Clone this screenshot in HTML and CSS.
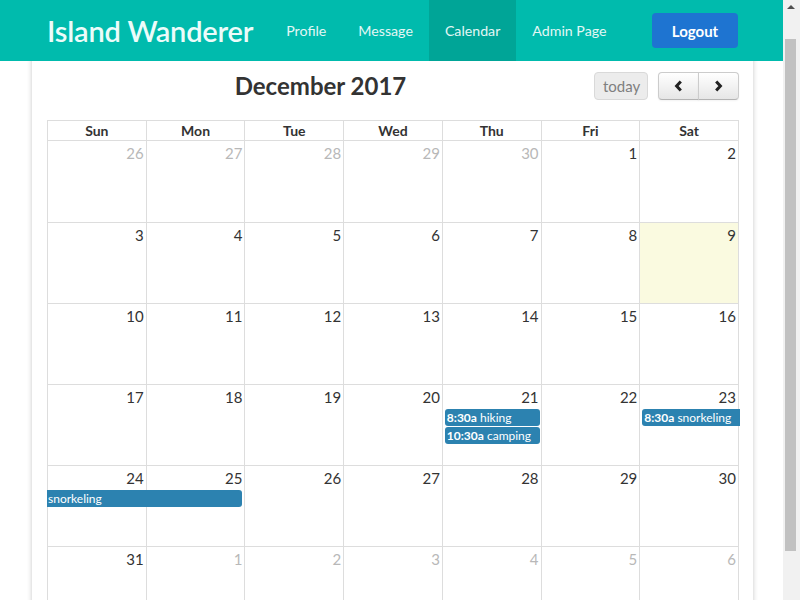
FILE: index.html
```html
<!DOCTYPE html>
<html lang="en">
<head>
<meta charset="utf-8">
<title>Island Wanderer - Calendar</title>
<link rel="stylesheet" href="styles.css">
</head>
<body>
<nav class="navbar">
  <div class="nav-inner">
    <a class="brand" href="#">Island Wanderer</a>
    <ul class="nav-links">
      <li><a href="#">Profile</a></li>
      <li><a href="#">Message</a></li>
      <li class="active"><a href="#">Calendar</a></li>
      <li><a href="#">Admin Page</a></li>
    </ul>
    <button class="logout">Logout</button>
  </div>
</nav>

<div class="scrollbar" aria-hidden="true">
  <div class="scroll-up"></div>
  <div class="scroll-thumb"></div>
</div>

<main class="card">
  <div class="toolbar">
    <h2 class="title">December 2017</h2>
    <div class="tools">
      <button class="btn today">today</button>
      <div class="btn-group">
        <button class="btn nav-btn"><svg width="9" height="12" viewBox="0 0 9 12"><polyline points="6.8,1.5 2.6,6 6.8,10.5" fill="none" stroke="#222" stroke-width="3"/></svg></button>
        <button class="btn nav-btn"><svg width="9" height="12" viewBox="0 0 9 12"><polyline points="2.2,1.5 6.4,6 2.2,10.5" fill="none" stroke="#222" stroke-width="3"/></svg></button>
      </div>
    </div>
  </div>

  <div class="cal">
    <div class="dow">
      <div>Sun</div><div>Mon</div><div>Tue</div><div>Wed</div><div>Thu</div><div>Fri</div><div>Sat</div>
    </div>

    <div class="week">
      <div class="day other"><span>26</span></div>
      <div class="day other"><span>27</span></div>
      <div class="day other"><span>28</span></div>
      <div class="day other"><span>29</span></div>
      <div class="day other"><span>30</span></div>
      <div class="day"><span>1</span></div>
      <div class="day"><span>2</span></div>
    </div>

    <div class="week">
      <div class="day"><span>3</span></div>
      <div class="day"><span>4</span></div>
      <div class="day"><span>5</span></div>
      <div class="day"><span>6</span></div>
      <div class="day"><span>7</span></div>
      <div class="day"><span>8</span></div>
      <div class="day today-cell"><span>9</span></div>
    </div>

    <div class="week">
      <div class="day"><span>10</span></div>
      <div class="day"><span>11</span></div>
      <div class="day"><span>12</span></div>
      <div class="day"><span>13</span></div>
      <div class="day"><span>14</span></div>
      <div class="day"><span>15</span></div>
      <div class="day"><span>16</span></div>
    </div>

    <div class="week">
      <div class="day"><span>17</span></div>
      <div class="day"><span>18</span></div>
      <div class="day"><span>19</span></div>
      <div class="day"><span>20</span></div>
      <div class="day"><span>21</span></div>
      <div class="day"><span>22</span></div>
      <div class="day"><span>23</span></div>
      <div class="event c5 r2"><b>8:30a</b> hiking</div>
      <div class="event c5 r3"><b>10:30a</b> camping</div>
      <div class="event c7 r2 cont-right"><b>8:30a</b> snorkeling</div>
    </div>

    <div class="week">
      <div class="day"><span>24</span></div>
      <div class="day"><span>25</span></div>
      <div class="day"><span>26</span></div>
      <div class="day"><span>27</span></div>
      <div class="day"><span>28</span></div>
      <div class="day"><span>29</span></div>
      <div class="day"><span>30</span></div>
      <div class="event c1-2 r2 cont-left">snorkeling</div>
    </div>

    <div class="week">
      <div class="day"><span>31</span></div>
      <div class="day other"><span>1</span></div>
      <div class="day other"><span>2</span></div>
      <div class="day other"><span>3</span></div>
      <div class="day other"><span>4</span></div>
      <div class="day other"><span>5</span></div>
      <div class="day other"><span>6</span></div>
    </div>
  </div>
</main>
<script src="script.js"></script>
</body>
</html>
```

FILE: styles.css
```css
* { box-sizing: border-box; }

html, body {
  margin: 0;
  padding: 0;
  background: #fff;
  font-family: Lato, "Open Sans", "Liberation Sans", sans-serif;
  color: #333;
}

body {
  padding-top: 78px;
  padding-right: 15px;
}

/* Fake window scrollbar (overlays the right edge) */
.scrollbar {
  position: fixed;
  top: 0;
  right: 0;
  width: 17px;
  height: 100vh;
  background: #f1f1f1;
  z-index: 20;
}

.scroll-up {
  position: absolute;
  top: 5px;
  left: 4px;
  width: 0;
  height: 0;
  border-left: 4px solid transparent;
  border-right: 4px solid transparent;
  border-bottom: 4px solid #505050;
}

.scroll-thumb {
  position: absolute;
  top: 39px;
  left: 2px;
  width: 11px;
  height: 512px;
  background: #c1c1c1;
}

/* Navbar */
.navbar {
  position: fixed;
  top: 0;
  left: 0;
  right: 15px;
  height: 61px;
  background: #00bbad;
  z-index: 10;
}

.nav-inner {
  width: 721px;
  margin: 0 auto;
  padding: 0 15px;
  height: 61px;
  display: flex;
  align-items: center;
}

.brand {
  font-size: 29px;
  font-weight: 600;
  color: #ecfcfa;
  text-decoration: none;
  margin-right: 17px;
  letter-spacing: -0.2px;
}

.nav-links {
  list-style: none;
  margin: 0;
  padding: 0;
  display: flex;
  height: 61px;
}

.nav-links li {
  display: flex;
}

.nav-links a {
  display: flex;
  align-items: center;
  padding: 0 16px;
  font-size: 14.2px;
  color: #e3f7f5;
  text-decoration: none;
}

.nav-links li.active a {
  background: #00a597;
}

.logout {
  margin-left: auto;
  width: 86px;
  height: 35px;
  border: none;
  border-radius: 4px;
  background: #1e74d1;
  color: #fff;
  font-family: inherit;
  font-size: 15px;
  font-weight: 700;
}

/* Card */
.card {
  width: 721px;
  margin: 0 auto;
  padding: 20px 14px 15px 15px;
  background: #fff;
  box-shadow: 0 0 5px rgba(0, 0, 0, 0.22);
}

.toolbar {
  display: flex;
  align-items: center;
  margin-bottom: 20px;
}

.title {
  flex: 1;
  margin: 0;
  text-align: center;
  font-size: 24px;
  font-weight: 700;
  color: #333;
  line-height: 28px;
}

.tools {
  display: flex;
}

.btn {
  height: 28px;
  font-family: inherit;
  font-size: 15px;
  border: 1px solid #ccc;
  border-bottom-color: #b3b3b3;
  border-radius: 4px;
  background: linear-gradient(#fff, #e6e6e6);
  box-shadow: inset 0 1px 0 rgba(255,255,255,.2), 0 1px 2px rgba(0,0,0,.05);
  color: #333;
  padding: 0 8px;
}

.btn.today {
  width: 54px;
  background: #ececec;
  border-color: #d9d9d9;
  color: #7f7f7f;
  box-shadow: none;
}

.btn-group {
  display: flex;
  margin-left: 10px;
}

.nav-btn {
  width: 41px;
  display: flex;
  align-items: center;
  justify-content: center;
}

.btn-group .nav-btn:first-child {
  border-top-right-radius: 0;
  border-bottom-right-radius: 0;
}

.btn-group .nav-btn:last-child {
  margin-left: -1px;
  border-top-left-radius: 0;
  border-bottom-left-radius: 0;
}

/* Calendar grid */
.cal {
  border-top: 1px solid #ddd;
  border-left: 1px solid #ddd;
}

.dow {
  display: grid;
  grid-template-columns: repeat(7, 1fr);
}

.dow div {
  border-right: 1px solid #ddd;
  border-bottom: 1px solid #ddd;
  height: 20px;
  line-height: 19px;
  text-align: center;
  font-size: 14px;
  font-weight: 700;
}

.week {
  display: grid;
  grid-template-columns: repeat(7, 1fr);
  grid-template-rows: 24px 18px 18px 1fr;
  height: 81px;
}

.week:nth-child(2) {
  height: 82px;
}

.day {
  grid-row: 1 / -1;
  border-right: 1px solid #ddd;
  border-bottom: 1px solid #ddd;
  text-align: right;
  padding: 2px 2px 0 0;
  font-size: 15px;
  line-height: 20px;
}

.day:nth-child(1) { grid-column: 1; }
.day:nth-child(2) { grid-column: 2; }
.day:nth-child(3) { grid-column: 3; }
.day:nth-child(4) { grid-column: 4; }
.day:nth-child(5) { grid-column: 5; }
.day:nth-child(6) { grid-column: 6; }
.day:nth-child(7) { grid-column: 7; }

.day.other {
  color: #b8b8b8;
}

.day.today-cell {
  background: #fafae0;
}

.event {
  z-index: 1;
  height: 17px;
  margin: 0 2px 1px 2px;
  padding: 0 2px;
  background: #2c82b0;
  color: #fff;
  font-size: 12px;
  line-height: 17px;
  border-radius: 3px;
  white-space: nowrap;
  overflow: hidden;
}

.event b {
  font-weight: 700;
}

.c5 { grid-column: 5; }
.c7 { grid-column: 7; }
.c1-2 { grid-column: 1 / 3; }
.r2 { grid-row: 2; }
.r3 { grid-row: 3; }

.cont-right {
  margin-right: -1px;
  border-top-right-radius: 0;
  border-bottom-right-radius: 0;
}

.cont-left {
  margin-left: -1px;
  margin-right: 3px;
  padding-left: 1px;
  border-top-left-radius: 0;
  border-bottom-left-radius: 0;
}
```

FILE: script.js
```js
window.scrollTo(0, 26);
```
